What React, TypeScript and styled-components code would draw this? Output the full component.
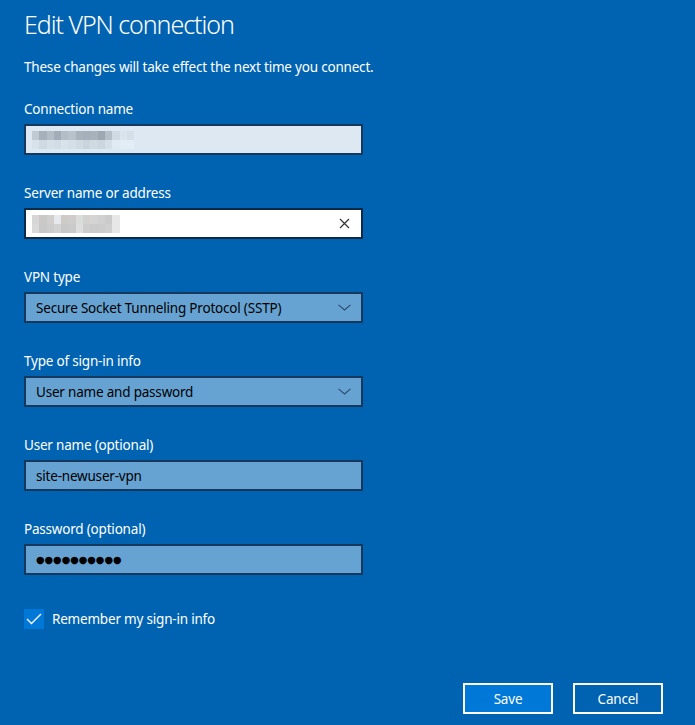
import React from 'react'
import styled, { createGlobalStyle } from 'styled-components'

const GlobalStyle = createGlobalStyle`
  html, body {
    margin: 0;
    padding: 0;
    background: #0063b1;
  }
  body {
    font-family: 'Noto Sans', 'Open Sans', sans-serif;
    color: #fff;
  }
`

const Dialog = styled.div`
  width: 695px;
  height: 725px;
  box-sizing: border-box;
  padding: 6px 32px 0 24px;
  display: flex;
  flex-direction: column;
  background: #0063b1;
`

const Title = styled.h1`
  margin: 0;
  font-size: 25px;
  font-weight: 300;
  line-height: 36px;
  letter-spacing: -1.05px;
`

const Note = styled.p`
  margin: 15px 0 22px;
  font-size: 13.5px;
  line-height: 20px;
  letter-spacing: -0.2px;
`

const Field = styled.div<{ $last?: boolean }>`
  display: flex;
  flex-direction: column;
  margin-bottom: ${p => (p.$last ? 0 : 28)}px;
`

const Label = styled.label`
  font-size: 13.5px;
  line-height: 20px;
  letter-spacing: -0.2px;
  margin-bottom: 5px;
`

const Box = styled.div<{ $tone: 'pale' | 'focus' | 'fill' }>`
  width: 339px;
  height: 31px;
  box-sizing: border-box;
  border: 2px solid ${p => (p.$tone === 'focus' ? '#0b2a48' : '#16385c')};
  background: ${p =>
    p.$tone === 'pale' ? '#dde8f2' : p.$tone === 'focus' ? '#ffffff' : '#66a3d3'};
  display: flex;
  align-items: center;
  padding: 0 8px 0 10px;
  color: #000;
  font-size: 13.5px;
  letter-spacing: -0.2px;
`

const Value = styled.span`
  flex: 1;
  white-space: nowrap;
`

const Dots = styled.span`
  flex: 1;
  font-size: 9.8px;
  letter-spacing: 0;
  font-family: 'DejaVu Sans', sans-serif;
`

const Mosaic = styled.div<{ $cell: number }>`
  display: grid;
  grid-template-columns: repeat(auto-fill, ${p => p.$cell}px);
  grid-auto-rows: 9px;
  margin-left: -4px;
  flex: none;
`

const Cell = styled.span<{ $c: string }>`
  background: ${p => p.$c};
`

const IconSlot = styled.span`
  display: flex;
  align-items: center;
  justify-content: center;
  width: 18px;
  height: 18px;
`

const CheckRow = styled.div`
  display: flex;
  align-items: center;
  gap: 8px;
  margin-top: 34px;
  font-size: 13.5px;
  letter-spacing: -0.2px;
  line-height: 20px;
`

const CheckBox = styled.span`
  width: 20px;
  height: 20px;
  background: #0078d7;
  display: flex;
  align-items: center;
  justify-content: center;
`

const Buttons = styled.div`
  margin-top: 54px;
  display: flex;
  justify-content: flex-end;
  gap: 20px;
`

const Button = styled.button<{ $primary?: boolean }>`
  width: 90px;
  height: 31px;
  box-sizing: border-box;
  border: 2px solid #fff;
  background: ${p => (p.$primary ? '#0078d7' : '#0063b1')};
  color: #fff;
  font-family: inherit;
  font-size: 13.5px;
  letter-spacing: -0.2px;
  padding: 0;
`

const paleRows = [
  ['#c0cad3', '#a6b0ba', '#b3bdc6', '#a3adb7', '#b3bdc6', '#b8c2cb', '#a8b2bb', '#a6b0ba', '#a8b2bb', '#9ea8b2', '#b5bfc8', '#d0dae3', '#dae4ed', '#d5dfe8'],
  ['#d8e2eb', '#cfd9e2', '#d5dfe8', '#d2dce5', '#d8e2eb', '#d5dfe8', '#d0dae3', '#cad4dd', '#d0dae3', '#ccd6df', '#d5dfe8', '#e0eaf3', '#e3edf6', '#e3edf6'],
]

const whiteRows = [
  ['#d6d6d6', '#cbc9c7', '#d0cfcd', '#e6e8ec', '#cdcac8', '#cfcdcb', '#dadcda', '#d2d3d1', '#d4d4d4', '#d0d0d0', '#cbcbcb', '#e7e7e7', '#ffffff'],
  ['#d9d9d9', '#c8c8c8', '#cccccc', '#d2d2d2', '#c8c8c8', '#cacaca', '#dedede', '#cdcdcd', '#cbcbcb', '#cccccc', '#cfcfcf', '#e7e7e7', '#ffffff'],
]

const Blur = ({ rows, cell }: { rows: string[][]; cell: number }) => (
  <Mosaic $cell={cell} style={{ width: rows[0].length * cell }}>
    {rows.flat().map((c, i) => (
      <Cell key={i} $c={c} />
    ))}
  </Mosaic>
)

const Chevron = () => (
  <IconSlot>
    <svg width="13" height="7" viewBox="0 0 13 7">
      <path d="M0.5 0.8 L6.5 6 L12.5 0.8" fill="none" stroke="#2a4a6a" strokeWidth="1.1" />
    </svg>
  </IconSlot>
)

const Clear = () => (
  <IconSlot>
    <svg width="11" height="11" viewBox="0 0 11 11">
      <path d="M1 1 L10 10 M10 1 L1 10" stroke="#333" strokeWidth="1.2" />
    </svg>
  </IconSlot>
)

const App: React.FC = () => {
  return (
    <>
      <GlobalStyle />
      <Dialog>
        <Title>Edit VPN connection</Title>
        <Note>These changes will take effect the next time you connect.</Note>

        <Field>
          <Label>Connection name</Label>
          <Box $tone="pale">
            <Blur rows={paleRows} cell={7.3} />
          </Box>
        </Field>

        <Field>
          <Label>Server name or address</Label>
          <Box $tone="focus">
            <Blur rows={whiteRows} cell={7.3} />
            <Value />
            <Clear />
          </Box>
        </Field>

        <Field>
          <Label>VPN type</Label>
          <Box $tone="fill">
            <Value>Secure Socket Tunneling Protocol (SSTP)</Value>
            <Chevron />
          </Box>
        </Field>

        <Field>
          <Label>Type of sign-in info</Label>
          <Box $tone="fill">
            <Value>User name and password</Value>
            <Chevron />
          </Box>
        </Field>

        <Field>
          <Label>User name (optional)</Label>
          <Box $tone="fill">
            <Value>site-newuser-vpn</Value>
          </Box>
        </Field>

        <Field $last>
          <Label>Password (optional)</Label>
          <Box $tone="fill">
            <Dots>●●●●●●●●●●</Dots>
          </Box>
        </Field>

        <CheckRow>
          <CheckBox>
            <svg width="16" height="12" viewBox="0 0 16 12">
              <path d="M1 6 L5.5 10.5 L15 1" fill="none" stroke="#fff" strokeWidth="1.4" />
            </svg>
          </CheckBox>
          Remember my sign-in info
        </CheckRow>

        <Buttons>
          <Button $primary>Save</Button>
          <Button>Cancel</Button>
        </Buttons>
      </Dialog>
    </>
  )
}

export default App
